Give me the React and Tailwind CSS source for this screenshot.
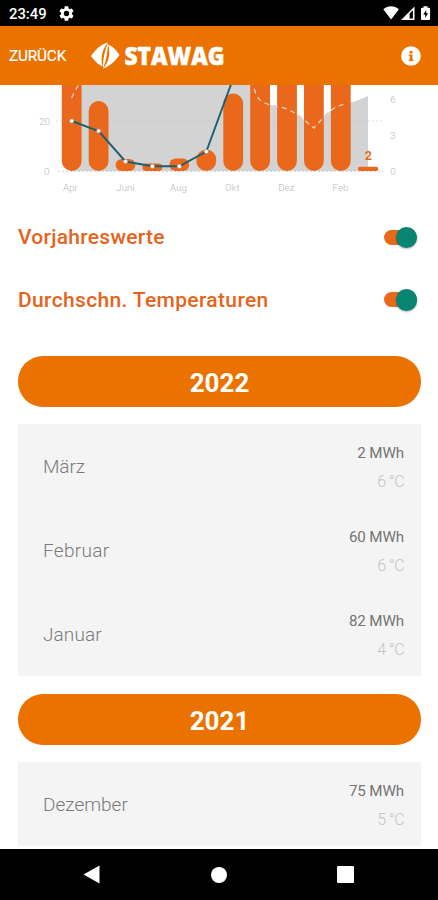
import React from "react";

const years = [
  {
    year: "2022",
    months: [
      { name: "März", usage: "2 MWh", temp: "6 °C", spacing: "tracking-[-0.1px]" },
      { name: "Februar", usage: "60 MWh", temp: "6 °C", spacing: "tracking-[0.3px]" },
      { name: "Januar", usage: "82 MWh", temp: "4 °C", spacing: "tracking-[0.1px]" },
    ],
  },
  {
    year: "2021",
    months: [{ name: "Dezember", usage: "75 MWh", temp: "5 °C", spacing: "tracking-[0px]" }],
  },
];

const bars = [
  [71.7, 40],
  [98.6, 101],
  [125.5, 159],
  [152.4, 163.5],
  [179.3, 158.5],
  [206.3, 149.5],
  [233.2, 93.5],
  [260.1, 40],
  [287, 40],
  [313.9, 40],
  [340.8, 40],
];

const points = [
  [71.7, 121],
  [98.6, 131],
  [125.5, 161.5],
  [152.4, 166.3],
  [179.3, 166.3],
  [206.3, 151.5],
];

const monthLabels = [
  ["Apr", 70.5],
  ["Juni", 125.5],
  ["Aug", 178.5],
  ["Okt", 232.3],
  ["Dez", 286.3],
  ["Feb", 340.5],
];

function StatusBar() {
  return (
    <div className="flex h-[26px] shrink-0 items-center bg-black pl-[9px] pr-[7px] text-white">
      <span className="w-[38px] whitespace-nowrap pt-[2px] text-[14.8px] font-medium leading-none">23:49</span>
      <svg className="ml-[12px] mt-px" width="15" height="15" viewBox="2 2 20 20" fill="currentColor">
        <path
          fillRule="evenodd"
          d="M19.14 12.94c.04-.3.06-.61.06-.94 0-.32-.02-.64-.07-.94l2.03-1.58c.18-.14.23-.41.12-.61l-1.92-3.32c-.12-.22-.37-.29-.59-.22l-2.39.96c-.5-.38-1.03-.7-1.62-.94L14.4 2.81c-.04-.24-.24-.41-.48-.41h-3.84c-.24 0-.43.17-.47.41l-.36 2.54c-.59.24-1.13.57-1.62.94l-2.39-.96c-.22-.08-.47 0-.59.22L2.74 8.87c-.12.21-.08.47.12.61l2.03 1.58c-.05.3-.09.63-.09.94s.02.64.07.94l-2.03 1.58c-.18.14-.23.41-.12.61l1.92 3.32c.12.22.37.29.59.22l2.39-.96c.5.38 1.03.7 1.62.94l.36 2.54c.05.24.24.41.48.41h3.84c.24 0 .44-.17.47-.41l.36-2.54c.59-.24 1.13-.56 1.62-.94l2.39.96c.22.08.47 0 .59-.22l1.92-3.32c.12-.22.07-.47-.12-.61l-2.01-1.58zM12 15.6A3.6 3.6 0 1 1 12 8.4a3.6 3.6 0 0 1 0 7.2z"
        />
      </svg>
      <svg className="ml-auto" width="48" height="16" viewBox="0 0 48 16" fill="currentColor">
        <path d="M0.3 4.3C4.7 0.2 11.5 0.2 15.9 4.3L8.1 14.6z" />
        <path fillRule="evenodd" d="M31.5 1.5V15H18zM29.9 5.3L26.6 8.6V13.5H29.9z" />
        <path
          fillRule="evenodd"
          d="M40.5 1.2h4v1.5h1.7c.5 0 .9.4.9.9v10.5c0 .5-.4.9-.9.9h-7.3c-.5 0-.9-.4-.9-.9V3.6c0-.5.4-.9.9-.9h1.6zM43.2 5.2l-3 4.2h1.9v3.3l3-4.4h-1.9z"
        />
      </svg>
    </div>
  );
}

function Header() {
  return (
    <header className="flex h-[59px] shrink-0 items-center bg-[#ec7200] pl-[9px] pr-[17px] text-white">
      <span className="w-[82px] whitespace-nowrap pt-[2px] text-[15.3px] tracking-[-0.15px] [-webkit-text-stroke:0.2px_white]">
        ZURÜCK
      </span>
      <svg width="136" height="44" viewBox="0 -8 136 44" fill="white">
        <path d="M0 14C4.5 7.500 9.500 2.500 16.800 0.500L16.600 2.500C22 4 25.500 8.500 28.500 13C24 19.500 19 24 12.200 26.500L12 24.500C7 22.500 3.500 19 0 14z" />
        <path
          d="M17 0.500C11.800 6.500 9 14.500 11.600 25C12.300 18 13.400 9 17 0.500z"
          fill="#ec7200"
        />
        <path
          d="M12 26.800C17.500 20.500 20 12.500 17 2C16.500 9.500 15.500 18 12 26.800z"
          fill="#ec7200"
        />
        <text
          x="33.500"
          y="22.500"
          fontFamily="Open Sans, sans-serif"
          fontWeight="800"
          fontSize="25"
          textLength="100"
          lengthAdjust="spacingAndGlyphs"
          stroke="white"
          strokeWidth="0.5"
        >
          STAWAG
        </text>
      </svg>
      <svg className="ml-auto" width="20" height="20" viewBox="0 0 20 20">
        <circle cx="10" cy="10" r="9.800" fill="white" />
        <path d="M8.600 4.900h2.900v2.600H8.600zM7.900 8.600h3.600v5h0.900v1.500H7.900v-1.500h0.900v-3.500h-0.900z" fill="#ec7200" />
      </svg>
    </header>
  );
}

function Chart() {
  return (
    <svg className="block shrink-0" width="438" height="121" viewBox="0 85 438 121" fontFamily="Roboto, sans-serif">
      <path
        d="M71.7 98Q76 88 82 80H252C255 93 257 99 263 102C270 106 279 106 287 109C299 114 306 122 313.900 129C325 116 331 107 345 104C354 102 361 99 368 96V171H71.700z"
        fill="#d3d3d3"
      />
      <path d="M56 121H383" stroke="#c8c8c8" strokeWidth="0.6" strokeDasharray="2 2" />
      <path d="M58 171.300H383" stroke="#c8c8c8" strokeWidth="0.9" strokeDasharray="2 2" />
      {bars.map(([x, top]) => (
        <rect
          key={x}
          x={x - 9.9}
          y={top}
          width="19.8"
          height={171 - top}
          rx={Math.min(9.9, (171 - top) / 2)}
          fill="#ea681b"
        />
      ))}
      <rect x="358" y="166.800" width="20.200" height="4.200" rx="2" fill="#ea681b" />
      <path
        d="M71.700 98Q76 88 82 80M252 80C255 93 257 99 263 102C270 106 279 106 287 109C299 114 306 122 313.900 128C325 116 331 107 345 104"
        fill="none"
        stroke="#dccfc6"
        strokeWidth="1.3"
        strokeDasharray="5 4"
      />
      <polyline
        points={points.map((p) => p.join(",")).join(" ") + " 233,79"}
        fill="none"
        stroke="#1f5f70"
        strokeWidth="1.9"
      />
      {points.map(([x, y]) => (
        <circle key={x} cx={x} cy={y} r="2.100" fill="white" stroke="#8d9c9c" strokeWidth="0.4" />
      ))}
      <text x="368.300" y="160.300" textAnchor="middle" fontSize="12.500" fontWeight="700" fill="#ea681b">2</text>
      <g fill="#b8b8b8" fontSize="9.800" fontWeight="300">
        <text x="50" y="124.700" textAnchor="end">20</text>
        <text x="49.500" y="174.700" textAnchor="end">0</text>
        <text x="393" y="102.700" textAnchor="middle">6</text>
        <text x="393" y="138.700" textAnchor="middle">3</text>
        <text x="393" y="174.700" textAnchor="middle">0</text>
        {monthLabels.map(([label, x]) => (
          <text key={label} x={x} y="190.700" textAnchor="middle">{label}</text>
        ))}
      </g>
    </svg>
  );
}

function ToggleRow({ label, spacing }) {
  return (
    <div className="flex h-[62.5px] shrink-0 items-center justify-between pl-[18px] pr-[21px]">
      <span className={"pt-px text-[21px] font-medium text-[#e4641c] " + spacing}>{label}</span>
      <span className="flex h-[15px] w-[33px] items-center justify-end rounded-full bg-[#ea681b]">
        <span className="size-[21.5px] shrink-0 rounded-full bg-[#078572] shadow-[0_1px_2px_rgba(0,0,0,0.3)]" />
      </span>
    </div>
  );
}

function YearSection({ year, months }) {
  return (
    <section className="mb-[18px] pl-[18px] pr-[17px]">
      <h2 className="flex h-[51px] items-center justify-center rounded-[25px] bg-[#ec7200] pt-[2px] text-[26px] font-bold leading-none text-white">
        {year}
      </h2>
      <div className="mt-[17px] bg-[#f4f4f4]">
        {months.map((m) => (
          <div key={m.name} className="flex h-[84px] items-center justify-between pl-[25px] pr-[17px] pt-[2px]">
            <span className={"pt-px text-[19px] font-light text-[#7a7a7a] " + m.spacing}>{m.name}</span>
            <div className="flex flex-col items-end gap-[5px] leading-[24px]">
              <span className="text-[15.2px] tracking-[-0.15px] text-[#757575]">{m.usage}</span>
              <span className="text-[16px] font-light tracking-[-0.6px] text-[#c4c4c4]">{m.temp}</span>
            </div>
          </div>
        ))}
      </div>
    </section>
  );
}

function NavBar() {
  return (
    <nav className="flex h-[51px] shrink-0 items-center justify-between bg-black pl-[83px] pr-[84px]">
      <svg width="17" height="19" viewBox="0 0 17 19"><path d="M0.500 9.500L16.500 0.500V18.500z" fill="white" /></svg>
      <span className="size-4 rounded-full bg-white" />
      <span className="size-[17px] rounded-[1px] bg-white" />
    </nav>
  );
}

export default function App() {
  return (
    <div className="flex h-[900px] w-[438px] flex-col overflow-hidden bg-white font-['Roboto',sans-serif]">
      <StatusBar />
      <Header />
      <main className="flex min-h-0 flex-1 flex-col overflow-hidden">
        <Chart />
        <ToggleRow label="Vorjahreswerte" spacing="tracking-[0.27px]" />
        <ToggleRow label="Durchschn. Temperaturen" spacing="tracking-[0.35px]" />
        <div className="mt-[25px]">
          {years.map((y) => (
            <YearSection key={y.year} {...y} />
          ))}
        </div>
      </main>
      <NavBar />
    </div>
  );
}
